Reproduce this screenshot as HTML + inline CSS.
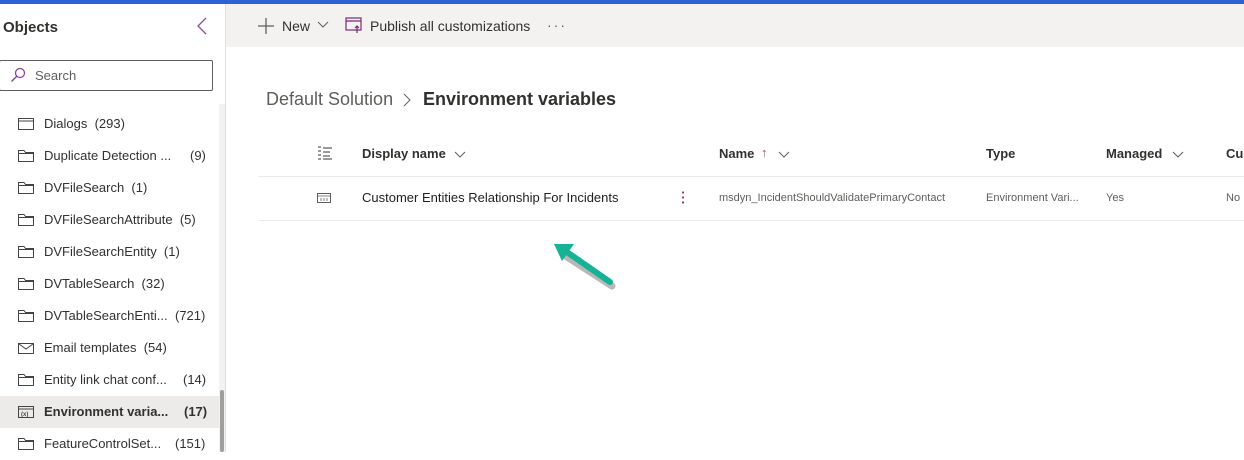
<!DOCTYPE html>
<html><head><style>
*{margin:0;padding:0;box-sizing:border-box}
body{width:1244px;height:452px;overflow:hidden;background:#fff;font-family:"Liberation Sans",sans-serif;color:#323130;position:relative}
.a{position:absolute;white-space:nowrap}
.item{position:absolute;left:0;width:219px;height:32px;font-size:13px;color:#323130}
.item svg{position:absolute;left:18px;top:9px}
.item .t{position:absolute;left:44px;top:8px}
.item .c{position:absolute;top:8px}
.hd{font-size:13px;font-weight:bold;color:#323130}
</style></head><body>
<div class="a" style="left:0;top:0;width:1244px;height:4px;background:#2b63d6"></div>
<div class="a" style="left:226px;top:4px;width:1018px;height:43px;background:#f3f2f1"></div>
<div class="a" style="left:225px;top:4px;width:1px;height:448px;background:#e1dfdd"></div>
<div class="a" style="left:3px;top:19px;font-size:15px;font-weight:bold;color:#323130">Objects</div>
<svg class="a" style="left:196px;top:17px" width="12" height="18"><path d="M10 1 L2 9 L10 17" stroke="#8a4d9a" stroke-width="1.3" fill="none"/></svg>
<div class="a" style="left:-1px;top:60px;width:214px;height:31px;border:1px solid #605e5c;border-radius:2px"></div>
<svg class="a" style="left:10px;top:67px" width="16" height="16"><circle cx="10" cy="6" r="4.5" stroke="#8a3a9a" fill="none" stroke-width="1.2"/><path d="M7 9 L1.5 14.5" stroke="#8a3a9a" stroke-width="1.3"/></svg>
<div class="a" style="left:35px;top:68px;font-size:13px;color:#605e5c">Search</div>
<div class="a" style="left:219px;top:104px;width:6px;height:348px;background:#f3f2f1"></div>
<div class="a" style="left:220px;top:390px;width:4px;height:62px;background:#a19f9d;border-radius:2px"></div>

<div class="item" style="top:108px"><svg width="17" height="14"><rect x="0.5" y="1.5" width="15" height="11" fill="none" stroke="#444"/><path d="M1 4H15" stroke="#444"/></svg><span class="t">Dialogs&nbsp; (293)</span></div>
<div class="item" style="top:140px"><svg width="17" height="14"><path d="M0.5 1.5H6L7.5 3.5H15.5V12.5H0.5Z M0.5 4.5H15.5" fill="none" stroke="#444"/></svg><span class="t">Duplicate Detection ...</span><span class="c" style="left:190px">(9)</span></div>
<div class="item" style="top:172px"><svg width="17" height="14"><path d="M0.5 1.5H6L7.5 3.5H15.5V12.5H0.5Z M0.5 4.5H15.5" fill="none" stroke="#444"/></svg><span class="t">DVFileSearch&nbsp; (1)</span></div>
<div class="item" style="top:204px"><svg width="17" height="14"><path d="M0.5 1.5H6L7.5 3.5H15.5V12.5H0.5Z M0.5 4.5H15.5" fill="none" stroke="#444"/></svg><span class="t">DVFileSearchAttribute&nbsp; (5)</span></div>
<div class="item" style="top:236px"><svg width="17" height="14"><path d="M0.5 1.5H6L7.5 3.5H15.5V12.5H0.5Z M0.5 4.5H15.5" fill="none" stroke="#444"/></svg><span class="t">DVFileSearchEntity&nbsp; (1)</span></div>
<div class="item" style="top:268px"><svg width="17" height="14"><path d="M0.5 1.5H6L7.5 3.5H15.5V12.5H0.5Z M0.5 4.5H15.5" fill="none" stroke="#444"/></svg><span class="t">DVTableSearch&nbsp; (32)</span></div>
<div class="item" style="top:300px"><svg width="17" height="14"><path d="M0.5 1.5H6L7.5 3.5H15.5V12.5H0.5Z M0.5 4.5H15.5" fill="none" stroke="#444"/></svg><span class="t">DVTableSearchEnti...</span><span class="c" style="left:175px">(721)</span></div>
<div class="item" style="top:332px"><svg width="17" height="14"><rect x="0.5" y="2.5" width="15" height="10" fill="none" stroke="#444"/><path d="M1 3L8 8L15 3" fill="none" stroke="#444"/></svg><span class="t">Email templates&nbsp; (54)</span></div>
<div class="item" style="top:364px"><svg width="17" height="14"><path d="M0.5 1.5H6L7.5 3.5H15.5V12.5H0.5Z M0.5 4.5H15.5" fill="none" stroke="#444"/></svg><span class="t">Entity link chat conf...</span><span class="c" style="left:183px">(14)</span></div>
<div class="item" style="top:396px;background:#edebe9;font-weight:bold"><svg width="17" height="14"><rect x="0.5" y="1.5" width="15" height="11" fill="none" stroke="#444"/><path d="M1 4H15" stroke="#444"/><text x="3" y="11" font-size="6" fill="#444" font-family="Liberation Sans">(x)</text></svg><span class="t">Environment varia...</span><span class="c" style="left:184px">(17)</span></div>
<div class="item" style="top:428px"><svg width="17" height="14"><path d="M0.5 1.5H6L7.5 3.5H15.5V12.5H0.5Z M0.5 4.5H15.5" fill="none" stroke="#444"/></svg><span class="t">FeatureControlSet...</span><span class="c" style="left:175px">(151)</span></div>

<svg class="a" style="left:257px;top:17px" width="18" height="18"><path d="M9 1V17M1 9H17" stroke="#605e5c" stroke-width="1.3"/></svg>
<div class="a" style="left:282px;top:18px;font-size:14px">New</div>
<svg class="a" style="left:317px;top:21px" width="12" height="8"><path d="M1 1L6 6L11 1" stroke="#605e5c" fill="none"/></svg>
<svg class="a" style="left:345px;top:16px" width="18" height="18"><rect x="1" y="2" width="15" height="12" stroke="#7a2a7a" fill="none" stroke-width="1.2"/><path d="M1 5H16M12 17V10M10 12L12 10L14 12" stroke="#7a2a7a" fill="none" stroke-width="1.2"/></svg>
<div class="a" style="left:370px;top:18px;font-size:14px">Publish all customizations</div>
<div class="a" style="left:547px;top:17px;font-size:14px;letter-spacing:2px;color:#605e5c">···</div>

<div class="a" style="left:266px;top:89px;font-size:18px;color:#605e5c">Default Solution</div>
<svg class="a" style="left:402px;top:93px" width="10" height="14"><path d="M2 1L8 7L2 13" stroke="#605e5c" fill="none"/></svg>
<div class="a" style="left:423px;top:89px;font-size:18px;font-weight:bold">Environment variables</div>

<svg class="a" style="left:317px;top:146px" width="16" height="14"><path d="M1 1H4M1 5H4M1 9H4M1 13H4M6 2H15M6 6H13M6 10H13M6 13H15" stroke="#605e5c" stroke-width="1.2"/></svg>
<div class="a hd" style="left:362px;top:146px">Display name</div>
<svg class="a" style="left:454px;top:151px" width="12" height="8"><path d="M1 1L6 6L11 1" stroke="#605e5c" fill="none"/></svg>
<div class="a hd" style="left:719px;top:146px">Name</div>
<div class="a" style="left:761px;top:145px;font-size:13px;color:#8a5a5a">↑</div>
<svg class="a" style="left:778px;top:151px" width="12" height="8"><path d="M1 1L6 6L11 1" stroke="#605e5c" fill="none"/></svg>
<div class="a hd" style="left:986px;top:146px">Type</div>
<div class="a hd" style="left:1106px;top:146px">Managed</div>
<svg class="a" style="left:1172px;top:151px" width="12" height="8"><path d="M1 1L6 6L11 1" stroke="#605e5c" fill="none"/></svg>
<div class="a hd" style="left:1226px;top:146px">Cu</div>
<div class="a" style="left:258px;top:176px;width:986px;height:1px;background:#edebe9"></div>
<div class="a" style="left:258px;top:220px;width:986px;height:1px;background:#edebe9"></div>
<svg class="a" style="left:317px;top:193px" width="14" height="10"><rect x="0.5" y="0.5" width="13" height="9" stroke="#605e5c" fill="none"/><path d="M1 3H13M4 5V8M7 5V8M10 5V8" stroke="#605e5c" stroke-width="0.8"/></svg>
<div class="a" style="left:362px;top:190px;font-size:13px;color:#201f1e">Customer Entities Relationship For Incidents</div>
<div class="a" style="left:682px;top:190px;width:2px;height:16px;background:radial-gradient(circle,#8a3a6a 1px,transparent 1.2px) 0 0/2px 5px"></div>
<div class="a" style="left:719px;top:192px;font-size:11px;color:#605e5c">msdyn_IncidentShouldValidatePrimaryContact</div>
<div class="a" style="left:986px;top:192px;font-size:11px;color:#605e5c">Environment Vari...</div>
<div class="a" style="left:1106px;top:192px;font-size:11px;color:#605e5c">Yes</div>
<div class="a" style="left:1226px;top:192px;font-size:11px;color:#605e5c">No</div>

<svg class="a" style="left:548px;top:236px" width="75" height="56"><path d="M62 48 L14 17" stroke="#333" stroke-opacity=".35" stroke-width="7" stroke-linecap="round" transform="translate(2,2)"/><path d="M62 46 L16 14" stroke="#16b295" stroke-width="6" stroke-linecap="round"/><path d="M6 8 L26 8 L14 25 Z" fill="#16b295"/></svg>
</body></html>
